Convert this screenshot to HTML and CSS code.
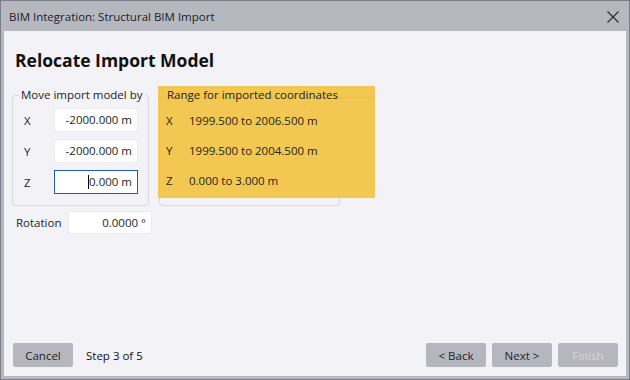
FILE: index.html
```html
<!DOCTYPE html>
<html lang="en">

<head>
    <meta charset="UTF-8">
    <title>BIM Integration: Structural BIM Import</title>
    <link rel="stylesheet" href="styles.css">
</head>

<body>

    <div class="window">
        <!-- title bar -->
        <div class="titlebar">
            <span class="title">BIM Integration: Structural BIM Import</span>
            <svg class="close" width="12" height="12" viewBox="0 0 12 12">
                <path d="M0.5 0.5 L11.5 11.5 M11.5 0.5 L0.5 11.5" stroke="#2b2d33" stroke-width="1.2" fill="none" />
            </svg>
        </div>

        <div class="content">
            <h2>Relocate Import Model</h2>

            <div class="groups">
                <fieldset class="group move">
                    <legend>Move import model by</legend>
                    <div class="row">
                        <span class="axis">X</span>
                        <div class="field">-2000.000 m</div>
                    </div>
                    <div class="row">
                        <span class="axis">Y</span>
                        <div class="field">-2000.000 m</div>
                    </div>
                    <div class="row">
                        <span class="axis">Z</span>
                        <div class="field focused"><span class="caret"></span>0.000 m</div>
                    </div>
                </fieldset>

                <div class="range-wrap">
                    <fieldset class="group range">
                        <legend>Range for imported coordinates</legend>
                        <div class="range-row"><span class="axis">X</span><span>1999.500 to 2006.500 m</span></div>
                        <div class="range-row"><span class="axis">Y</span><span>1999.500 to 2004.500 m</span></div>
                        <div class="range-row"><span class="axis">Z</span><span>0.000 to 3.000 m</span></div>
                    </fieldset>
                    <!-- yellow marker over the range box -->
                    <div class="highlight"></div>
                </div>
            </div>

            <div class="rotation">
                <span class="rot-label">Rotation</span>
                <div class="field">0.0000 °</div>
            </div>

            <!-- wizard buttons -->
            <div class="footer">
                <button class="btn">Cancel</button>
                <span class="step">Step 3 of 5</span>
                <div class="nav">
                    <button class="btn">&lt; Back</button>
                    <button class="btn">Next &gt;</button>
                    <button class="btn" disabled>Finish</button>
                </div>
            </div>
        </div>
    </div>

</body>

</html>
```

FILE: styles.css
```css
body {
    margin: 0;
    font-family: "Open Sans", "Noto Sans", sans-serif;
    font-size: 11.5px;
    color: #1e1e24;
}

.window {
    width: 630px;
    height: 380px;
    box-sizing: border-box;
    border: 1px solid #7a7c86;
    background-color: #b6b8c0;
    padding: 0 3px 3px 3px;
    display: flex;
    flex-direction: column;
}

.titlebar {
    height: 30px;
    display: flex;
    align-items: center;
    justify-content: space-between;
    padding: 0 7px 0 5px;
    flex-shrink: 0;
}

.title {
    color: #202028;
}

.close {
    margin-top: 1px;
}

.content {
    flex: 1;
    background-color: #f3f2f7;
    padding: 0 8px 9px 9px;
    display: flex;
    flex-direction: column;
}

.content h2 {
    font-size: 17.5px;
    font-weight: bold;
    margin: 17px 0 0 2px;
    line-height: 24px;
    color: #111;
}

.groups {
    display: flex;
    align-items: stretch;
    gap: 10px;
    margin-top: 15px;
    margin-left: -1px;
}

.group {
    margin: 0;
    border: 1px solid #d9d9df;
    border-radius: 3px;
    min-width: 0;
}

.group legend {
    padding: 0 2px;
    margin-left: 0;
    line-height: 16px;
    white-space: nowrap;
}

.move {
    width: 137px;
    box-sizing: border-box;
    padding: 5px 10px 11px 6px;
}

.row {
    display: flex;
    align-items: center;
    justify-content: space-between;
    height: 24px;
    margin-bottom: 7px;
    padding-left: 5px;
}

.row:last-child {
    margin-bottom: 0;
}

.field {
    width: 84px;
    height: 24px;
    box-sizing: border-box;
    background-color: #fff;
    border: 1px solid #ececf0;
    text-align: right;
    padding-right: 5px;
    line-height: 22px;
}

.field.focused {
    border-color: #1d5fa6;
}

.caret {
    display: inline-block;
    width: 1px;
    height: 14px;
    background-color: #000;
    vertical-align: -3px;
}

.range-wrap {
    position: relative;
    display: flex;
}

.range {
    width: 181px;
    box-sizing: border-box;
    padding: 3px 6px 0 5px;
}

.range legend,
.range-row {
    position: relative;
    z-index: 1;
}

.range-row {
    height: 30px;
    line-height: 30px;
    white-space: nowrap;
    padding-left: 1px;
    color: #26241c;
}

.range-row .axis {
    display: inline-block;
    width: 23px;
}

.highlight {
    position: absolute;
    left: -1px;
    top: -1px;
    width: 217px;
    height: 112px;
    background: linear-gradient(to bottom, #f2c852 11px, #e6be54 11px, #e6be54 12px, #f2c852 12px);
}

.rotation {
    display: flex;
    align-items: center;
    margin-top: 5px;
    margin-left: 3px;
}

.rot-label {
    width: 52px;
}

.rotation .field {
    height: 23px;
    line-height: 21px;
}

.footer {
    margin-top: auto;
    display: flex;
    align-items: center;
}

.step {
    margin-left: 13px;
    color: #111;
}

.nav {
    margin-left: auto;
    display: flex;
    gap: 6px;
}

.btn {
    width: 60px;
    height: 24px;
    border: none;
    border-radius: 2px;
    background-color: #b5b7bf;
    font-family: inherit;
    font-size: 11.5px;
    color: #22232a;
    padding: 0;
}

.btn:disabled {
    color: #d6d6dc;
}
```
